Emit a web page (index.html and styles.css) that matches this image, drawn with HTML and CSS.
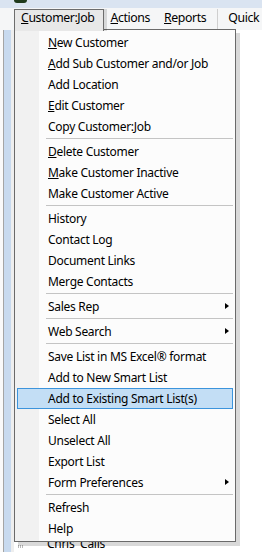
FILE: index.html
```html
<!DOCTYPE html>
<html lang="en">
<head>
  <meta charset="UTF-8">
  <title>Customer Center</title>
  <link rel="stylesheet" href="styles.css">
</head>
<body>
  <div class="window">
    <div class="titlebar">
      <span class="app-icon"></span>
    </div>

    <nav class="menubar">
      <div class="menubar-item open"><u>C</u>ustomer:Job</div>
      <div class="menubar-item"><u>A</u>ctions</div>
      <div class="menubar-item"><u>R</u>eports</div>
      <div class="menubar-sep"></div>
      <div class="menubar-item">Quick</div>
      <span class="quick-icon"></span>
    </nav>

    <div class="workspace">
      <div class="side-strip"></div>
      <div class="list">
        <div class="list-row"><span class="grip"></span><span class="row-name">Chris  Calls</span></div>
      </div>
    </div>

    <!-- dropdown for Customer:Job -->
    <ul class="dropdown">
      <li class="item"><u>N</u>ew Customer</li>
      <li class="item"><u>A</u>dd Sub Customer and/or Job</li>
      <li class="item">Add Location</li>
      <li class="item"><u>E</u>dit Customer</li>
      <li class="item">Copy Customer:Job</li>
      <li class="sep"></li>
      <li class="item"><u>D</u>elete Customer</li>
      <li class="item"><u>M</u>ake Customer Inactive</li>
      <li class="item">Make Customer Active</li>
      <li class="sep"></li>
      <li class="item">History</li>
      <li class="item">Contact Log</li>
      <li class="item">Document Links</li>
      <li class="item">Merge Contacts</li>
      <li class="sep"></li>
      <li class="item has-sub">Sales Rep</li>
      <li class="sep"></li>
      <li class="item has-sub">Web Search</li>
      <li class="sep"></li>
      <li class="item">Save List in MS Excel® format</li>
      <li class="item">Add to New Smart List</li>
      <li class="item active">Add to Existing Smart List(s)</li>
      <li class="item">Select All</li>
      <li class="item">Unselect All</li>
      <li class="item">Export List</li>
      <li class="item has-sub">Form Preferences</li>
      <li class="sep"></li>
      <li class="item">Refresh</li>
      <li class="item">Help</li>
    </ul>
  </div>
</body>
</html>
```

FILE: styles.css
```css
* {
  margin: 0;
  padding: 0;
  box-sizing: border-box;
}

body {
  font-family: 'Noto Sans', sans-serif;
  font-size: 12px;
  letter-spacing: -0.28px;
  color: #000;
  background-color: #fff;
}

.window {
  position: relative;
  width: 262px;
  height: 552px;
  overflow: hidden;
}

.titlebar {
  height: 8px;
  background-color: #dae4f1;
  padding-left: 14px;
}

.app-icon {
  display: block;
  width: 13px;
  height: 3px;
  background-color: #1f3a1c;
  border-radius: 0 0 3px 3px;
}

.menubar {
  display: flex;
  align-items: flex-start;
  height: 22px;
  padding: 1px 0 0 14px;
  background-color: #f5f6f7;
}

.menubar-item {
  flex-shrink: 0;
  height: 21px;
  padding: 0 6px 4px 6px;
  border: 1px solid transparent;
  border-bottom: none;
  font-size: 12.3px;
  letter-spacing: -0.4px;
  line-height: 16px;
  white-space: nowrap;
}

.menubar-item.open {
  position: relative;
  z-index: 2;
  height: 22px;
  padding-right: 8px;
  border-color: #6d6d6d;
  background-color: #e8e8e8;
  box-shadow: 3px 0 0 rgba(0, 0, 0, 0.12);
}

.menubar-sep {
  flex-shrink: 0;
  width: 1px;
  height: 21px;
  margin: 0 3px 0 4px;
  background-color: #cfcfcf;
}

.quick-icon {
  flex-shrink: 0;
  width: 6px;
  height: 10px;
  margin: 4px 0 0 3px;
  background-color: #f2c64a;
  border-radius: 2px 0 0 2px;
}

.workspace {
  display: flex;
  height: 522px;
}

.side-strip {
  width: 14px;
  border-left: 3px solid #fafafa;
  background: linear-gradient(to right, #a5a5a5 0, #a5a5a5 1px, #c8daef 1px, #c8daef 8px, #eeeeee 8px);
}

.list {
  flex: 1;
  padding-top: 505px;
}

.list-row {
  display: flex;
  align-items: center;
  height: 16px;
}

.grip {
  width: 5px;
  height: 3px;
  margin: 6px 0 0 4px;
  background: repeating-linear-gradient(to right, #b9b9b9 0, #b9b9b9 1px, transparent 1px, transparent 2px);
}

.row-name {
  margin-left: 24px;
  white-space: pre;
}

.dropdown {
  position: absolute;
  z-index: 1;
  left: 14px;
  top: 29px;
  width: 222px;
  padding: 2px 0;
  list-style: none;
  border: 1px solid #6a6a6a;
  background: linear-gradient(to right, #f1f1f1 0, #f1f1f1 24px, #fcfcfc 24px);
  box-shadow: 4px 4px 0 rgba(0, 0, 0, 0.15);
}

.item {
  position: relative;
  height: 21px;
  margin: 0 2px;
  padding-left: 30px;
  border: 1px solid transparent;
  line-height: 19px;
  white-space: nowrap;
}

.item.active {
  background-color: #c3def5;
  border-color: #3c94dc;
}

.item.has-sub::after {
  content: '';
  position: absolute;
  right: 3px;
  top: 6px;
  border-left: 4px solid #000;
  border-top: 3.5px solid transparent;
  border-bottom: 3.5px solid transparent;
}

.sep {
  height: 4px;
  margin: 0 2px 0 31px;
  padding-top: 1px;
}

.sep::before {
  content: '';
  display: block;
  height: 1px;
  background-color: #c4c4c4;
}
```
